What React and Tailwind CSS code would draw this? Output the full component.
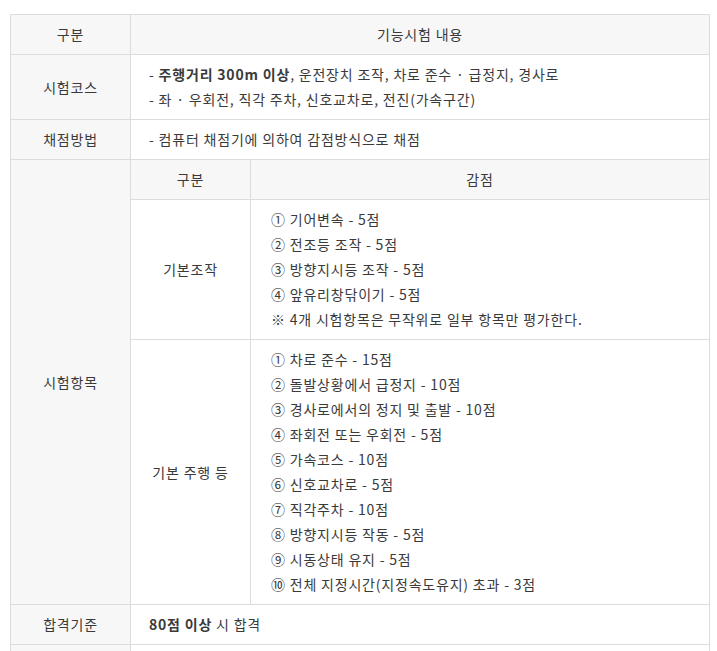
import React from "react";

const basic = [
  "① 기어변속 - 5점",
  "② 전조등 조작 - 5점",
  "③ 방향지시등 조작 - 5점",
  "④ 앞유리창닦이기 - 5점",
  "※ 4개 시험항목은 무작위로 일부 항목만 평가한다.",
];

const driving = [
  "① 차로 준수 - 15점",
  "② 돌발상황에서 급정지 - 10점",
  "③ 경사로에서의 정지 및 출발 - 10점",
  "④ 좌회전 또는 우회전 - 5점",
  "⑤ 가속코스 - 10점",
  "⑥ 신호교차로 - 5점",
  "⑦ 직각주차 - 10점",
  "⑧ 방향지시등 작동 - 5점",
  "⑨ 시동상태 유지 - 5점",
  "⑩ 전체 지정시간(지정속도유지) 초과 - 3점",
];

const th = "border border-[#dcdcdc] bg-[#f7f7f7] text-center font-normal px-3 py-[7px]";
const td = "border border-[#dcdcdc] bg-white text-left px-[18px] py-[7px]";

export default function App() {
  return (
    <div
      className="min-h-screen bg-white pt-[14px] pl-[10px] text-[14px] leading-[25px] tracking-[0.8px] text-[#3a3a3a]"
      style={{ fontFamily: '"Noto Sans CJK KR", "Noto Sans", sans-serif' }}
    >
      <table className="w-[700px] border-collapse table-fixed">
        <colgroup>
          <col className="w-[120px]" />
          <col className="w-[120px]" />
          <col />
        </colgroup>
        <tbody>
          <tr>
            <th className={th}>구분</th>
            <th className={th} colSpan={2}>기능시험 내용</th>
          </tr>
          <tr>
            <th className={th}>시험코스</th>
            <td className={td} colSpan={2}>
              <div>- <b className="font-bold">주행거리 300m 이상</b>, 운전장치 조작, 차로 준수 · 급정지, 경사로</div>
              <div>- 좌 · 우회전, 직각 주차, 신호교차로, 전진(가속구간)</div>
            </td>
          </tr>
          <tr>
            <th className={th}>채점방법</th>
            <td className={td} colSpan={2}>- 컴퓨터 채점기에 의하여 감점방식으로 채점</td>
          </tr>
          <tr>
            <th className={th} rowSpan={3}>시험항목</th>
            <th className={th}>구분</th>
            <th className={th}>감점</th>
          </tr>
          <tr>
            <td className="border border-[#dcdcdc] text-center py-[7px]">기본조작</td>
            <td className="border border-[#dcdcdc] pl-[20px] pr-3 py-[7px]">
              {basic.map((t) => (
                <div key={t}>{t}</div>
              ))}
            </td>
          </tr>
          <tr>
            <td className="border border-[#dcdcdc] text-center py-[7px]">기본 주행 등</td>
            <td className="border border-[#dcdcdc] pl-[20px] pr-3 py-[7px]">
              {driving.map((t) => (
                <div key={t}>{t}</div>
              ))}
            </td>
          </tr>
          <tr>
            <th className={th}>합격기준</th>
            <td className={td} colSpan={2}>
              <b className="font-bold">80점 이상</b> 시 합격
            </td>
          </tr>
          <tr>
            <th className={th}>&nbsp;</th>
            <td className={td} colSpan={2}>&nbsp;</td>
          </tr>
        </tbody>
      </table>
    </div>
  );
}
